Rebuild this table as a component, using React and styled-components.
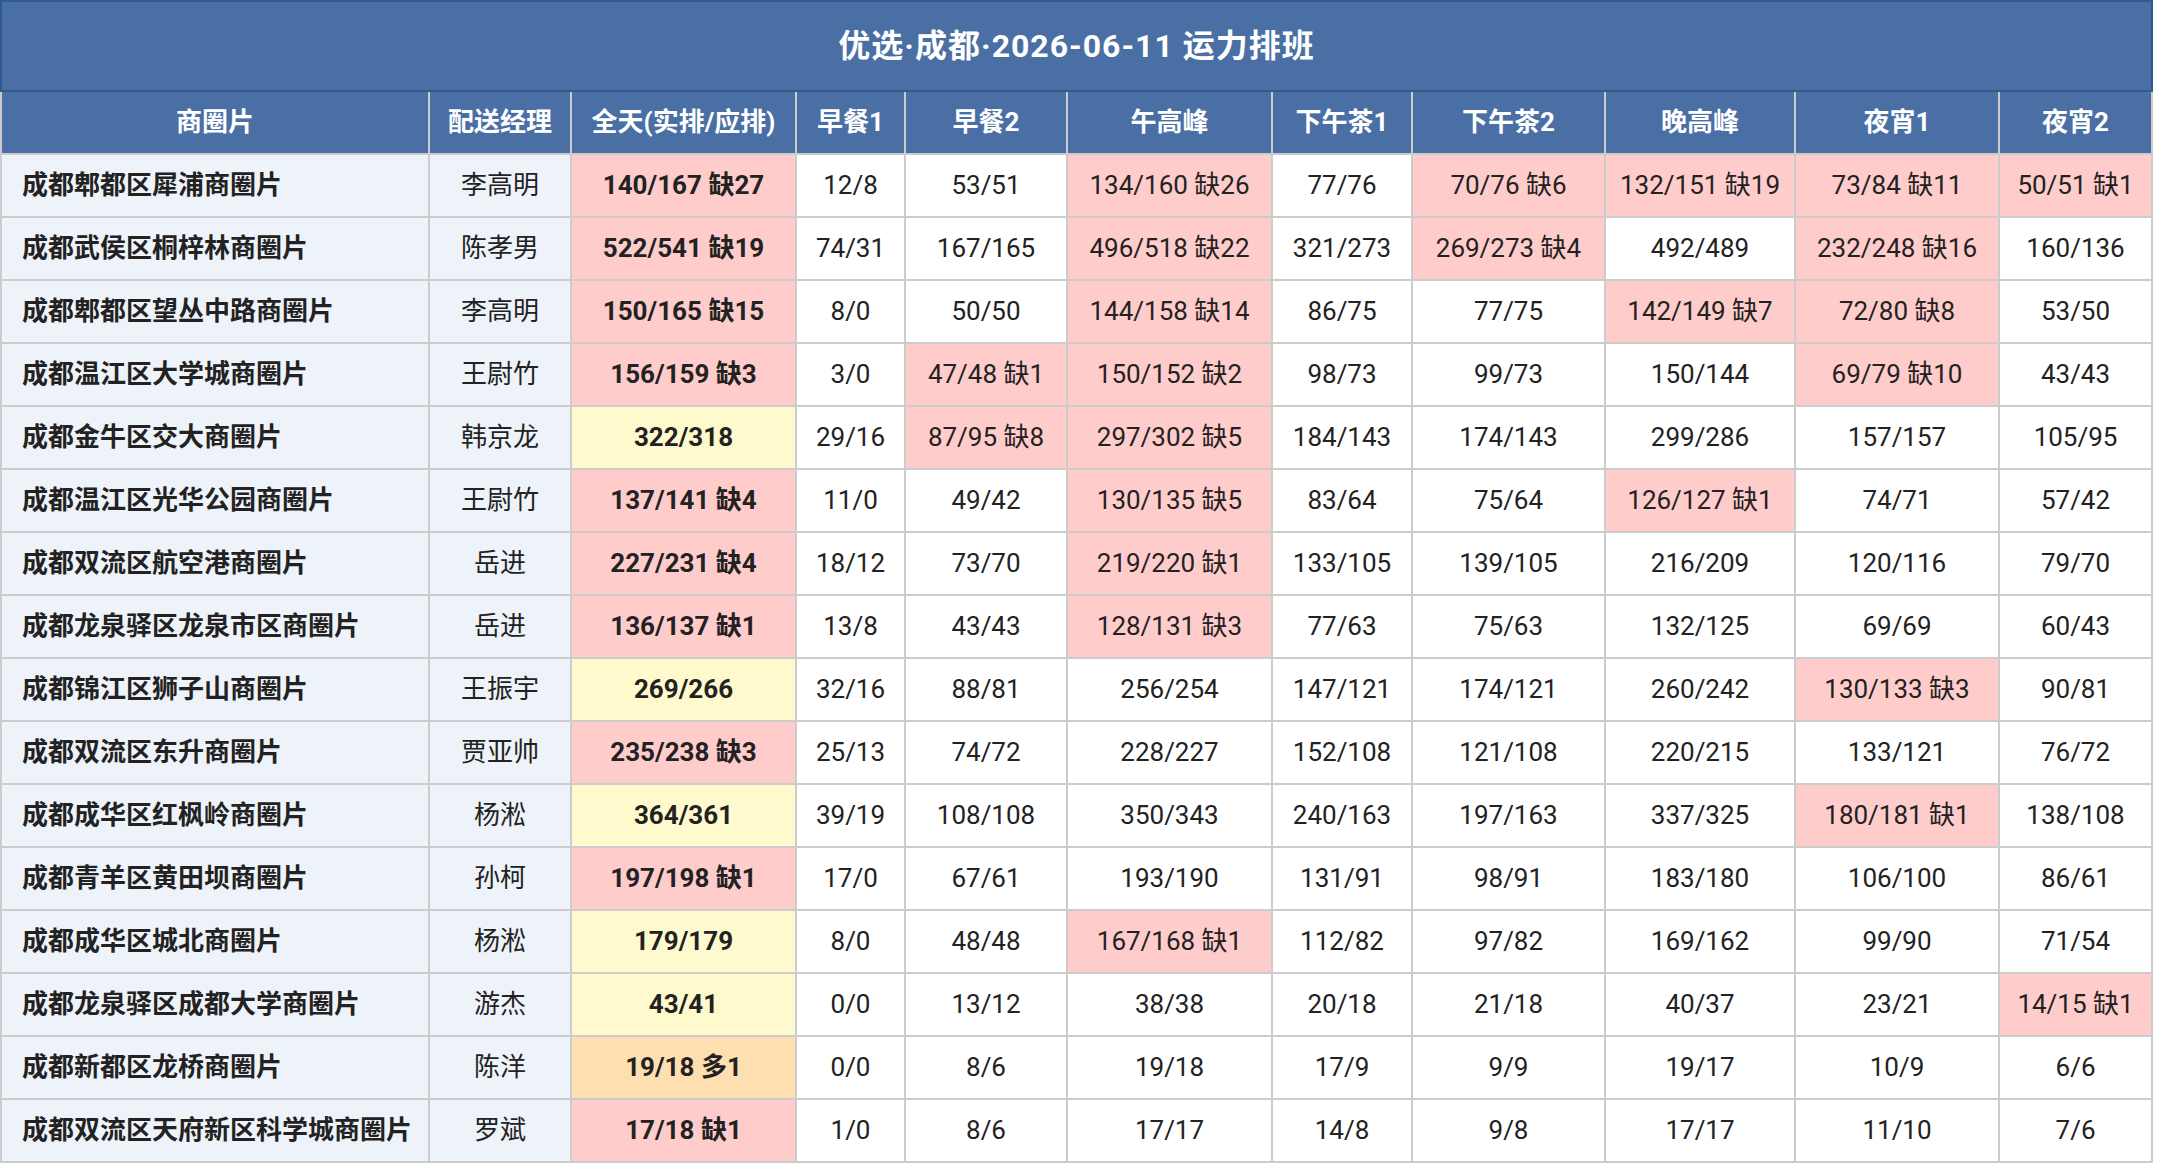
import React from "react";
import styled, { createGlobalStyle } from "styled-components";

const GlobalStyle = createGlobalStyle`
  html, body {
    margin: 0;
    padding: 0;
    background: #ffffff;
  }
  body {
    font-family: Roboto, "Noto Sans CJK SC", sans-serif;
    color: #222222;
  }
`;

const Page = styled.div`
  width: 2161px;
  background: #ffffff;
`;

const Table = styled.table`
  width: 2153px;
  border-collapse: collapse;
  table-layout: fixed;
  font-family: Roboto, "Noto Sans CJK SC", sans-serif;
  font-size: 26px;
`;

const TitleCell = styled.th`
  background: #4a6fa5;
  color: #ffffff;
  border: 2px solid #2f5b90;
  font-size: 32px;
  font-weight: 700;
  letter-spacing: 1px;
  line-height: 88px;
  padding: 0;
  text-align: center;
  white-space: nowrap;
`;

const HeadCell = styled.th`
  background: #4a6fa5;
  color: #ffffff;
  border: 2px solid #cccccc;
  font-weight: 700;
  line-height: 61px;
  padding: 0;
  text-align: center;
  white-space: nowrap;
`;

const Cell = styled.td`
  border: 2px solid #cccccc;
  line-height: 61px;
  padding: 0;
  text-align: center;
  white-space: nowrap;
  color: #222222;
`;

const NameCell = styled(Cell)`
  background: #eef3f9;
  font-weight: 700;
  text-align: left;
  padding-left: 20px;
`;

const ManagerCell = styled(Cell)`
  background: #eef3f9;
`;

const dayColors = {
  short: "#ffcccc",
  over: "#ffdfb0",
  ok: "#fffacd",
};

const DayCell = styled(Cell)`
  background: ${(p) => dayColors[p.$status]};
  font-weight: 700;
`;

const SlotCell = styled(Cell)`
  background: ${(p) => (p.$short ? "#ffcccc" : "#ffffff")};
`;

const widths = [428, 142, 225, 109, 162, 205, 140, 193, 190, 204, 153];

const headers = [
  "商圈片",
  "配送经理",
  "全天(实排/应排)",
  "早餐1",
  "早餐2",
  "午高峰",
  "下午茶1",
  "下午茶2",
  "晚高峰",
  "夜宵1",
  "夜宵2",
];

const rows = [
  ["成都郫都区犀浦商圈片", "李高明", "140/167 缺27", "12/8", "53/51", "134/160 缺26", "77/76", "70/76 缺6", "132/151 缺19", "73/84 缺11", "50/51 缺1"],
  ["成都武侯区桐梓林商圈片", "陈孝男", "522/541 缺19", "74/31", "167/165", "496/518 缺22", "321/273", "269/273 缺4", "492/489", "232/248 缺16", "160/136"],
  ["成都郫都区望丛中路商圈片", "李高明", "150/165 缺15", "8/0", "50/50", "144/158 缺14", "86/75", "77/75", "142/149 缺7", "72/80 缺8", "53/50"],
  ["成都温江区大学城商圈片", "王尉竹", "156/159 缺3", "3/0", "47/48 缺1", "150/152 缺2", "98/73", "99/73", "150/144", "69/79 缺10", "43/43"],
  ["成都金牛区交大商圈片", "韩京龙", "322/318", "29/16", "87/95 缺8", "297/302 缺5", "184/143", "174/143", "299/286", "157/157", "105/95"],
  ["成都温江区光华公园商圈片", "王尉竹", "137/141 缺4", "11/0", "49/42", "130/135 缺5", "83/64", "75/64", "126/127 缺1", "74/71", "57/42"],
  ["成都双流区航空港商圈片", "岳进", "227/231 缺4", "18/12", "73/70", "219/220 缺1", "133/105", "139/105", "216/209", "120/116", "79/70"],
  ["成都龙泉驿区龙泉市区商圈片", "岳进", "136/137 缺1", "13/8", "43/43", "128/131 缺3", "77/63", "75/63", "132/125", "69/69", "60/43"],
  ["成都锦江区狮子山商圈片", "王振宇", "269/266", "32/16", "88/81", "256/254", "147/121", "174/121", "260/242", "130/133 缺3", "90/81"],
  ["成都双流区东升商圈片", "贾亚帅", "235/238 缺3", "25/13", "74/72", "228/227", "152/108", "121/108", "220/215", "133/121", "76/72"],
  ["成都成华区红枫岭商圈片", "杨淞", "364/361", "39/19", "108/108", "350/343", "240/163", "197/163", "337/325", "180/181 缺1", "138/108"],
  ["成都青羊区黄田坝商圈片", "孙柯", "197/198 缺1", "17/0", "67/61", "193/190", "131/91", "98/91", "183/180", "106/100", "86/61"],
  ["成都成华区城北商圈片", "杨淞", "179/179", "8/0", "48/48", "167/168 缺1", "112/82", "97/82", "169/162", "99/90", "71/54"],
  ["成都龙泉驿区成都大学商圈片", "游杰", "43/41", "0/0", "13/12", "38/38", "20/18", "21/18", "40/37", "23/21", "14/15 缺1"],
  ["成都新都区龙桥商圈片", "陈洋", "19/18 多1", "0/0", "8/6", "19/18", "17/9", "9/9", "19/17", "10/9", "6/6"],
  ["成都双流区天府新区科学城商圈片", "罗斌", "17/18 缺1", "1/0", "8/6", "17/17", "14/8", "9/8", "17/17", "11/10", "7/6"],
];

const dayStatus = (v) => (v.includes("缺") ? "short" : v.includes("多") ? "over" : "ok");

export default function App() {
  return (
    <Page>
      <GlobalStyle />
      <Table>
        <colgroup>
          {widths.map((w, i) => (
            <col key={i} style={{ width: w }} />
          ))}
        </colgroup>
        <thead>
          <tr>
            <TitleCell colSpan={11}>优选·成都·2026-06-11 运力排班</TitleCell>
          </tr>
          <tr>
            {headers.map((h) => (
              <HeadCell key={h}>{h}</HeadCell>
            ))}
          </tr>
        </thead>
        <tbody>
          {rows.map((r) => (
            <tr key={r[0]}>
              <NameCell>{r[0]}</NameCell>
              <ManagerCell>{r[1]}</ManagerCell>
              <DayCell $status={dayStatus(r[2])}>{r[2]}</DayCell>
              {r.slice(3).map((v, i) => (
                <SlotCell key={i} $short={v.includes("缺")}>
                  {v}
                </SlotCell>
              ))}
            </tr>
          ))}
        </tbody>
      </Table>
    </Page>
  );
}
